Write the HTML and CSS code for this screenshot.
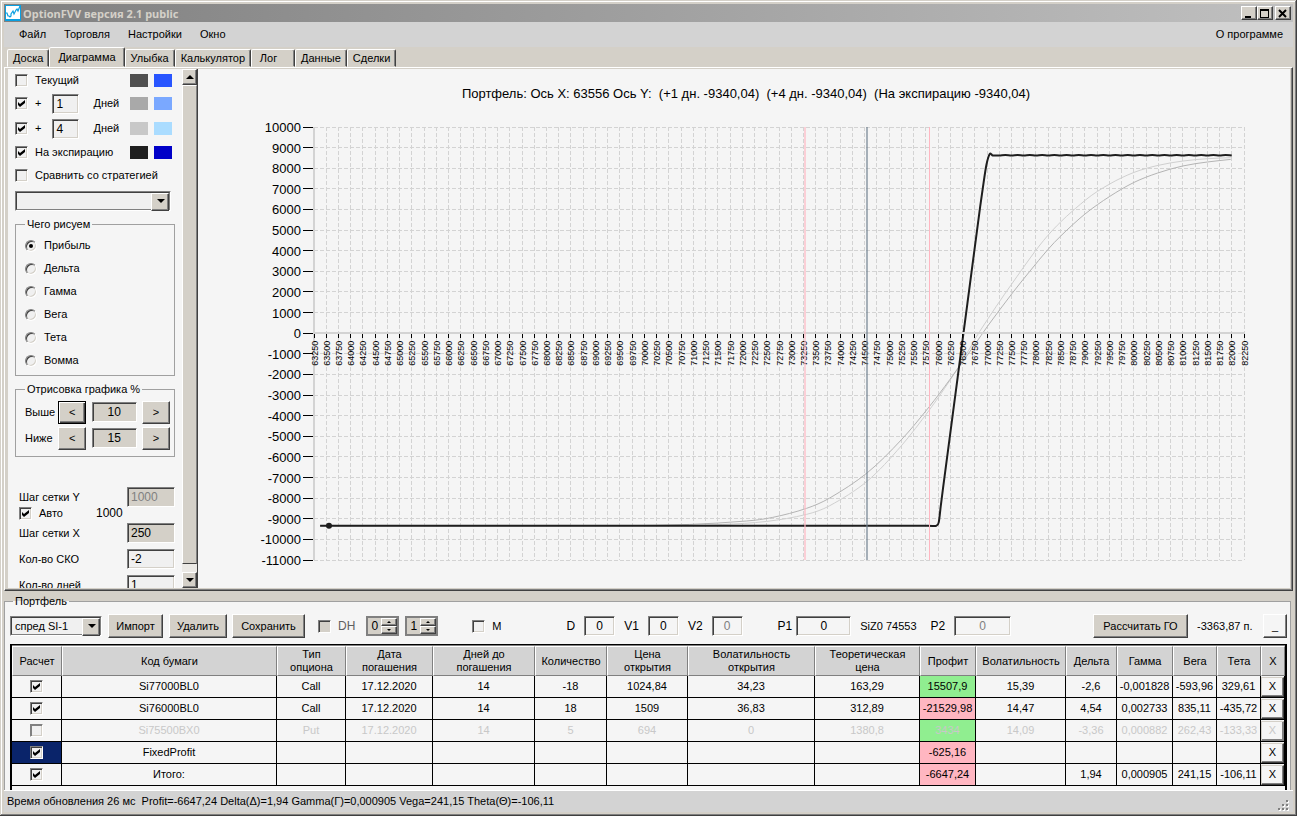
FILE: index.html
```
<!DOCTYPE html>
<html lang="ru">

<head>
    <meta charset="UTF-8">
    <meta name="viewport" content="width=device-width, initial-scale=1.0">
    <title>OptionFVV</title>
    <link rel="stylesheet" href="styles.css">
</head>

<body>
    <header class="titlebar">
        <svg class="logo" viewBox="0 0 16 16" width="16" height="16">
            <rect width="16" height="16" fill="#0a9fe0" />
            <path d="M1 1h14v13H1z" fill="#fff" />
            <path d="M1 8h1l1 3h1l1 1 1-1V9l2-3 1 3 2-4 1-1 1 2 2-5" fill="none" stroke="#0a9fe0" stroke-width="1.2" />
        </svg>
        <h1>OptionFVV версия 2.1 public</h1>
        <button class="win-button" aria-label="Свернуть">
            <svg width="12" height="10"><path d="M3 8h6v2H3z" /></svg>
        </button>
        <button class="win-button" aria-label="Развернуть">
            <svg width="12" height="10"><path d="M2 1h9v9H2zM3 3v6h7V3z" fill-rule="evenodd" /></svg>
        </button>
        <button class="win-button close" aria-label="Закрыть">
            <svg width="12" height="10"><path d="M3 2l7 7M10 2l-7 7" stroke="#000" stroke-width="2" /></svg>
        </button>
    </header>

    <nav class="menu">
        <a href="#">Файл</a>
        <a href="#">Торговля</a>
        <a href="#">Настройки</a>
        <a href="#">Окно</a>
        <a href="#" class="about">О программе</a>
    </nav>

    <div class="tabs">
        <button class="tab">Доска</button>
        <button class="tab active">Диаграмма</button>
        <button class="tab">Улыбка</button>
        <button class="tab">Калькулятор</button>
        <button class="tab log">Лог</button>
        <button class="tab">Данные</button>
        <button class="tab">Сделки</button>
    </div>

    <main class="page">
        <div class="sidebar">
            <div class="row">
                <input type="checkbox" id="current"><label for="current">Текущий</label>
                <span class="swatch dark-gray"></span><span class="swatch blue"></span>
            </div>
            <div class="row days">
                <input type="checkbox" id="plus1" checked><label for="plus1">+</label>
                <input type="text" class="field day" id="day1" value="1"><label for="day1">Дней</label>
                <span class="swatch mid-gray"></span><span class="swatch mid-blue"></span>
            </div>
            <div class="row days">
                <input type="checkbox" id="plus4" checked><label for="plus4">+</label>
                <input type="text" class="field day" id="day4" value="4"><label for="day4">Дней</label>
                <span class="swatch light-gray"></span><span class="swatch light-blue"></span>
            </div>
            <div class="row">
                <input type="checkbox" id="expiry" checked><label for="expiry">На экспирацию</label>
                <span class="swatch black"></span><span class="swatch deep-blue"></span>
            </div>
            <div class="row">
                <input type="checkbox" id="compare"><label for="compare">Сравнить со стратегией</label>
            </div>
            <div class="select strategy">
                <select aria-label="Стратегия"><option></option></select>
            </div>

            <fieldset class="group draw">
                <legend>Чего рисуем</legend>
                <label><input type="radio" name="draw" checked>Прибыль</label>
                <label><input type="radio" name="draw">Дельта</label>
                <label><input type="radio" name="draw">Гамма</label>
                <label><input type="radio" name="draw">Вега</label>
                <label><input type="radio" name="draw">Тета</label>
                <label><input type="radio" name="draw">Вомма</label>
            </fieldset>

            <fieldset class="group range">
                <legend>Отрисовка графика %</legend>
                <div class="range-row">
                    <label for="above">Выше</label>
                    <button class="button focused">&lt;</button>
                    <input type="text" class="field" id="above" value="10">
                    <button class="button">&gt;</button>
                </div>
                <div class="range-row">
                    <label for="below">Ниже</label>
                    <button class="button">&lt;</button>
                    <input type="text" class="field" id="below" value="15">
                    <button class="button">&gt;</button>
                </div>
            </fieldset>

            <div class="grid-settings">
                <div class="setting"><label for="stepY">Шаг сетки Y</label><input type="text" class="field gray" id="stepY" value="1000" disabled></div>
                <div class="auto"><input type="checkbox" id="auto" checked><label for="auto">Авто</label><span>1000</span></div>
                <div class="setting"><label for="stepX">Шаг сетки X</label><input type="text" class="field gray" id="stepX" value="250"></div>
                <div class="setting"><label for="sko">Кол-во СКО</label><input type="text" class="field" id="sko" value="-2"></div>
                <div class="setting"><label for="daysCount">Кол-во дней</label><input type="text" class="field" id="daysCount" value="1"></div>
            </div>
        </div>

        <div class="scrollbar">
            <button class="scroll-button" aria-label="Вверх"><i class="arrow up"></i></button>
            <div class="thumb"></div>
            <div class="track"></div>
            <button class="scroll-button" aria-label="Вниз"><i class="arrow"></i></button>
        </div>

        <div class="chart">
            <svg id="chart"></svg>
        </div>
    </main>

    <fieldset class="portfolio">
        <legend>Портфель</legend>
        <div class="controls">
            <div class="select name">
                <select aria-label="Портфель"><option>спред SI-1</option></select>
            </div>
            <button class="button import">Импорт</button>
            <button class="button delete">Удалить</button>
            <button class="button save">Сохранить</button>
            <label class="check dh"><input type="checkbox" class="gray" disabled>DH</label>
            <div class="spinner">
                <input type="text" value="0" aria-label="DH 1">
                <div><button aria-label="Больше"><i class="arrow up"></i></button><button aria-label="Меньше"><i class="arrow"></i></button></div>
            </div>
            <div class="spinner">
                <input type="text" value="1" aria-label="DH 2">
                <div><button aria-label="Больше"><i class="arrow up"></i></button><button aria-label="Меньше"><i class="arrow"></i></button></div>
            </div>
            <label class="check m"><input type="checkbox">M</label>
            <label class="param d">D<input type="text" class="field" value="0"></label>
            <label class="param">V1<input type="text" class="field" value="0"></label>
            <label class="param">V2<input type="text" class="field" value="0" disabled></label>
            <label class="param p1">P1<input type="text" class="field" value="0"></label>
            <span class="ticker">SiZ0 74553</span>
            <label class="param p2">P2<input type="text" class="field" value="0" disabled></label>
            <button class="button calc">Рассчитать ГО</button>
            <span class="margin">-3363,87 п.</span>
            <button class="button collapse">_</button>
        </div>

        <div class="table-wrap">
            <table>
                <colgroup>
                    <col class="w50"><col><col class="w69"><col class="w87"><col class="w102"><col class="w72">
                    <col class="w81"><col class="w127"><col class="w105"><col class="w56"><col class="w90">
                    <col class="w51"><col class="w56"><col class="w44"><col class="w44"><col class="w24">
                </colgroup>
                <thead>
                    <tr>
                        <th>Расчет</th>
                        <th>Код бумаги</th>
                        <th>Тип<br>опциона</th>
                        <th>Дата<br>погашения</th>
                        <th>Дней до<br>погашения</th>
                        <th>Количество</th>
                        <th>Цена<br>открытия</th>
                        <th>Волатильность<br>открытия</th>
                        <th>Теоретическая<br>цена</th>
                        <th>Профит</th>
                        <th>Волатильность</th>
                        <th>Дельта</th>
                        <th>Гамма</th>
                        <th>Вега</th>
                        <th>Тета</th>
                        <th>X</th>
                    </tr>
                </thead>
                <tbody>
                    <tr>
                        <td><input type="checkbox" aria-label="Расчет Si77000BL0" checked></td>
                        <td>Si77000BL0</td><td>Call</td><td>17.12.2020</td><td>14</td><td>-18</td>
                        <td>1024,84</td><td>34,23</td><td>163,29</td><td class="plus">15507,9</td><td>15,39</td>
                        <td>-2,6</td><td>-0,001828</td><td>-593,96</td><td>329,61</td>
                        <td><button>X</button></td>
                    </tr>
                    <tr>
                        <td><input type="checkbox" aria-label="Расчет Si76000BL0" checked></td>
                        <td>Si76000BL0</td><td>Call</td><td>17.12.2020</td><td>14</td><td>18</td>
                        <td>1509</td><td>36,83</td><td>312,89</td><td class="minus">-21529,98</td><td>14,47</td>
                        <td>4,54</td><td>0,002733</td><td>835,11</td><td>-435,72</td>
                        <td><button>X</button></td>
                    </tr>
                    <tr class="off">
                        <td><input type="checkbox" aria-label="Расчет Si75500BX0"></td>
                        <td>Si75500BX0</td><td>Put</td><td>17.12.2020</td><td>14</td><td>5</td>
                        <td>694</td><td>0</td><td>1380,8</td><td class="plus">3434</td><td>14,09</td>
                        <td>-3,36</td><td>0,000882</td><td>262,43</td><td>-133,33</td>
                        <td><button>X</button></td>
                    </tr>
                    <tr>
                        <td class="selected"><input type="checkbox" aria-label="Расчет FixedProfit" checked></td>
                        <td>FixedProfit</td><td></td><td></td><td></td><td></td>
                        <td></td><td></td><td></td><td class="minus">-625,16</td><td></td>
                        <td></td><td></td><td></td><td></td>
                        <td><button>X</button></td>
                    </tr>
                    <tr>
                        <td><input type="checkbox" aria-label="Расчет итого" checked></td>
                        <td>Итого:</td><td></td><td></td><td></td><td></td>
                        <td></td><td></td><td></td><td class="minus">-6647,24</td><td></td>
                        <td>1,94</td><td>0,000905</td><td>241,15</td><td>-106,11</td>
                        <td><button>X</button></td>
                    </tr>
                </tbody>
            </table>
        </div>
    </fieldset>

    <footer class="status">
        <span>Время обновления 26 мс&nbsp; Profit=-6647,24 Delta(Δ)=1,94 Gamma(Γ)=0,000905 Vega=241,15 Theta(Θ)=-106,11</span>
        <svg class="grip" width="12" height="12">
            <path d="M9 1h2v2H9zM5 5h2v2H5zM9 5h2v2H9zM1 9h2v2H1zM5 9h2v2H5zM9 9h2v2H9z" fill="#fff" />
            <path d="M8 0h2v2H8zM4 4h2v2H4zM8 4h2v2H8zM0 8h2v2H0zM4 8h2v2H4zM8 8h2v2H8z" fill="#808080" />
        </svg>
    </footer>

    <script src="chart.js"></script>
</body>

</html>
```

FILE: styles.css
```
* {
    box-sizing: border-box;
}

body {
    margin: 0;
    height: 100vh;
    padding: 4px;
    display: flex;
    flex-direction: column;
    overflow: hidden;
    background-color: #d4d0c8;
    font-family: "Liberation Sans", Arial, sans-serif;
    font-size: 11px;
    line-height: 13px;
    color: #000;
    box-shadow: inset -1px -1px #404040, inset 1px 1px #d4d0c8, inset -2px -2px #808080, inset 2px 2px #fff;
}

button,
input,
select {
    font: inherit;
    color: inherit;
    margin: 0;
    padding: 0;
    border-radius: 0;
    outline: none;
}

button {
    flex: none;
    background-color: #d4d0c8;
    border: 1px solid;
    border-color: #fff #404040 #404040 #fff;
    box-shadow: inset -1px -1px #808080;
}

fieldset {
    margin: 0;
    padding: 0;
    min-width: 0;
}

/* title and menu */

.titlebar {
    flex: none;
    display: flex;
    align-items: center;
    height: 18px;
    padding: 0 2px 0 1px;
    background: linear-gradient(to right, #808080, #c0c0c0);
}

.titlebar h1 {
    flex: 1;
    margin: 0 0 0 2px;
    font-family: "Noto Sans", Tahoma, sans-serif;
    font-size: 11px;
    font-weight: bold;
    color: #d4d0c8;
}

.win-button {
    width: 16px;
    height: 14px;
}

.win-button svg {
    display: block;
}

.win-button.close {
    margin-left: 2px;
}

.menu {
    flex: none;
    display: flex;
    align-items: center;
    gap: 18px;
    height: 25px;
    padding: 0 10px 0 15px;
    background-color: #d3d3d3;
}

.menu a {
    color: #000;
    text-decoration: none;
}

.menu .about {
    margin-left: auto;
}

/* tabs */

.tabs {
    flex: none;
    display: flex;
    align-items: flex-end;
    height: 20px;
    padding-left: 3px;
}

.tab {
    height: 18px;
    padding: 1px 5px 0;
    border: 1px solid;
    border-color: #fff #404040 transparent #fff;
    border-radius: 2px 2px 0 0;
    box-shadow: inset -1px 0 #808080;
    text-align: center;
}

.tab.active {
    height: 20px;
    padding: 0 8px;
}

.tab.log {
    width: 44px;
    padding-right: 14px;
}

.page {
    flex: 1;
    display: flex;
    min-height: 0;
    padding: 1px 2px 2px 3px;
    border: 1px solid;
    border-color: #fff #404040 #404040 #fff;
    box-shadow: inset -1px -1px #808080;
}

/* sidebar */

.sidebar {
    flex: none;
    width: 174px;
    padding: 0 7px;
    overflow: hidden;
    background-color: #f5f5f5;
}

.row {
    display: flex;
    align-items: center;
    gap: 6px;
    height: 23px;
}

.row:first-child {
    height: 22px;
}

.row.days {
    height: 25px;
}

.row input[type="checkbox"] {
    margin-right: 1px;
}

.row .day {
    width: 27px;
    margin: 0 8px 0 5px;
}

.swatch {
    width: 18px;
    height: 13px;
}

.swatch:nth-last-child(2) {
    margin-left: auto;
}

.swatch:last-child {
    margin-right: 3px;
}

.dark-gray { background-color: #505050; }
.mid-gray { background-color: #a9a9a9; }
.light-gray { background-color: #c8c8c8; }
.black { background-color: #1e1e1e; }
.blue { background-color: #2855ff; }
.mid-blue { background-color: #7aa8ff; }
.light-blue { background-color: #aadcff; }
.deep-blue { background-color: #0000c8; }

input[type="checkbox"],
input[type="radio"] {
    flex: none;
    appearance: none;
    display: block;
    width: 13px;
    height: 13px;
    background-color: #f0f0f0;
    border: 1px solid;
    border-color: #808080 #fff #fff #808080;
    box-shadow: inset 1px 1px #404040, inset -1px -1px #d4d0c8;
}

input[type="checkbox"].gray {
    background-color: #d4d0c8;
}

input[type="checkbox"]:checked::before {
    content: "";
    display: block;
    width: 7px;
    height: 7px;
    margin: 2px;
    background-color: #000;
    clip-path: polygon(0 2px, 2px 4px, 7px 0, 7px 3px, 2px 7px, 0 5px);
}

input[type="radio"] {
    width: 12px;
    height: 12px;
    border-radius: 50%;
}

input[type="radio"]:checked::before {
    content: "";
    display: block;
    width: 4px;
    height: 4px;
    margin: 3px;
    border-radius: 50%;
    background-color: #000;
}

.field {
    height: 20px;
    padding: 0 3px;
    background-color: #f0f0f0;
    border: 1px solid;
    border-color: #808080 #fff #fff #808080;
    box-shadow: inset 1px 1px #404040, inset -1px -1px #d4d0c8;
    font-size: 12px;
}

.field.gray {
    background-color: #d4d0c8;
}

.field:disabled {
    color: #808080;
}

.select {
    position: relative;
    height: 20px;
    border: 1px solid;
    border-color: #808080 #fff #fff #808080;
}

.select select {
    appearance: none;
    display: block;
    width: 100%;
    height: 100%;
    padding: 0 18px 0 3px;
    border: 1px solid;
    border-color: #404040 #808080 #808080 #404040;
    background-color: #f0f0f0;
}

.select::before {
    content: "";
    position: absolute;
    top: 1px;
    right: 1px;
    width: 16px;
    height: 16px;
    background-color: #d4d0c8;
    border: 1px solid;
    border-color: #fff #404040 #404040 #fff;
    box-shadow: inset -1px -1px #808080;
    pointer-events: none;
}

.select::after {
    content: "";
    position: absolute;
    top: 7px;
    right: 5px;
    border: 4px solid transparent;
    border-top-color: #000;
    border-bottom: 0;
    pointer-events: none;
}

.strategy {
    width: 156px;
    margin-top: 4px;
}

.group {
    border: 1px solid #a0a0a0;
}

.group legend {
    padding: 0 2px;
}

.draw {
    height: 158px;
    margin-top: 7px;
    padding: 3px 9px 0;
}

.draw label {
    display: flex;
    align-items: center;
    gap: 7px;
    height: 23px;
}

.range {
    height: 74px;
    margin-top: 7px;
    padding: 3px 4px 0 9px;
}

.range-row {
    display: flex;
    align-items: center;
    justify-content: space-between;
    height: 26px;
}

.range-row label {
    width: 28px;
}

.range-row .button {
    width: 28px;
    height: 23px;
}

.range-row .field {
    width: 45px;
    background-color: #d4d0c8;
    text-align: center;
}

.button.focused {
    border-color: #000;
    box-shadow: inset 1px 1px #fff, inset -1px -1px #404040, inset -2px -2px #808080;
}

.grid-settings {
    display: flex;
    flex-direction: column;
    gap: 6px;
    margin-top: 30px;
    padding-left: 4px;
}

.setting {
    display: flex;
    align-items: center;
    justify-content: space-between;
}

.setting .field {
    width: 48px;
}

.auto {
    display: flex;
    align-items: center;
    gap: 7px;
    height: 13px;
    margin: -6px 0 -3px;
}

.auto span {
    margin-left: 26px;
    font-size: 12px;
}

.scrollbar {
    flex: none;
    display: flex;
    flex-direction: column;
    width: 16px;
    border-right: 1px solid #404040;
}

.scroll-button,
.spinner button {
    display: flex;
    align-items: center;
    justify-content: center;
}

.scroll-button {
    height: 16px;
}

.thumb {
    flex: 1;
    border: 1px solid;
    border-color: #fff #808080 #404040 #fff;
}

.track {
    height: 8px;
    background-color: #ebe9e5;
}

.arrow {
    border: 4px solid transparent;
    border-top-color: #000;
    border-bottom: 0;
}

.arrow.up {
    border-top: 0;
    border-bottom: 4px solid #000;
}

/* chart */

.chart {
    flex: 1;
    min-width: 0;
    background-color: #f5f5f5;
}

.chart svg {
    display: block;
    width: 100%;
    height: 100%;
}

.chart .caption {
    font-size: 13px;
    text-anchor: middle;
    white-space: pre;
}

.chart .y-label {
    font-size: 13px;
    text-anchor: end;
}

.chart .x-label {
    font-size: 9px;
    text-anchor: middle;
}

.chart line {
    shape-rendering: crispEdges;
}

.grid {
    stroke: #d3d3d3;
    stroke-dasharray: 4 2;
}

.axis {
    stroke: #d3d3d3;
    stroke-width: 2;
}

.tick {
    stroke: #000;
}

.series {
    fill: none;
}

.series.day-1 { stroke: #b4b4b4; }
.series.day-4 { stroke: #d0d0d0; }
.series.at-expiry { stroke: #1e1e1e; stroke-width: 2; }

.sigma {
    stroke: #ffb6c1;
}

.sigma.low {
    stroke-width: 2;
    stroke-opacity: 0.6;
}

.price {
    stroke: #708090;
    stroke-width: 2;
    stroke-opacity: 0.6;
}

/* portfolio */

.portfolio {
    flex: none;
    height: 195px;
    margin: 4px 2px 0 0;
    padding: 0 3px 0 5px;
    border: 1px solid #a0a0a0;
    border-bottom: 0;
    background-color: #f5f5f5;
    overflow: hidden;
}

.portfolio legend {
    margin-left: 3px;
    padding: 0 2px;
}

.controls {
    display: flex;
    align-items: center;
    height: 36px;
}

.controls .button {
    height: 24px;
}

.select.name {
    width: 92px;
    margin-right: 6px;
}

.import { width: 55px; margin-right: 6px; }
.delete { width: 58px; margin-right: 5px; }
.save { width: 73px; }

.check {
    display: flex;
    align-items: center;
    gap: 7px;
}

.check.dh {
    margin: 0 11px 0 13px;
    font-size: 12px;
    color: #606060;
}

.check.m {
    margin-left: 28px;
}

.spinner {
    display: flex;
    width: 33px;
    height: 20px;
    margin-right: 6px;
    border: 2px solid #808080;
    background-color: #d4d0c8;
}

.spinner input {
    width: 13px;
    border: 0;
    background: none;
    text-align: center;
    font-size: 12px;
}

.spinner div {
    flex: 1;
    display: flex;
    flex-direction: column;
}

.spinner button {
    height: 8px;
}

.spinner .arrow {
    border-width: 2px;
    border-bottom: 0;
}

.spinner .arrow.up {
    border-top: 0;
    border-bottom: 2px solid #000;
}

.param {
    display: flex;
    align-items: center;
    gap: 9px;
    margin-right: 9px;
    font-size: 12px;
}

.param .field {
    width: 31px;
    text-align: center;
    background-color: #f5f5f5;
}

.param.d {
    margin-left: 65px;
}

.param.p1 {
    gap: 4px;
    margin-left: 26px;
}

.param.p1 .field {
    width: 55px;
}

.param.p2 {
    margin-left: 14px;
}

.param.p2 .field {
    width: 57px;
}

.calc {
    width: 95px;
    margin: 0 9px 0 auto;
}

.margin {
    width: 66px;
}

.collapse {
    width: 24px;
    background-color: #f5f5f5;
}

.table-wrap {
    height: 150px;
    border: 2px solid #000;
    border-top: 1px solid #000;
    box-shadow: inset 0 1px #808080;
    padding-top: 1px;
}

table {
    width: 100%;
    table-layout: fixed;
    border-collapse: separate;
    border-spacing: 0;
}

.w24 { width: 24px; }
.w44 { width: 44px; }
.w50 { width: 50px; }
.w51 { width: 51px; }
.w56 { width: 56px; }
.w69 { width: 69px; }
.w72 { width: 72px; }
.w81 { width: 81px; }
.w87 { width: 87px; }
.w90 { width: 90px; }
.w102 { width: 102px; }
.w105 { width: 105px; }
.w127 { width: 127px; }

th {
    height: 30px;
    padding: 0;
    font-weight: normal;
    background-color: #d3d3d3;
    border: 1px solid;
    border-color: #fff #808080 #808080 #fff;
}

td {
    height: 22px;
    padding: 0;
    text-align: center;
    white-space: nowrap;
    border-right: 1px solid #000;
    border-bottom: 1px solid #000;
}

td input[type="checkbox"] {
    margin: 0 auto;
}

td button {
    display: block;
    width: 100%;
    height: 20px;
    background-color: #f5f5f5;
    border-color: #d4d0c8 #404040 #404040 #d4d0c8;
}

.off td {
    color: #c8c8c8;
}

.off button {
    border-color: #d4d0c8 #808080 #808080 #d4d0c8;
}

.off input[type="checkbox"] {
    box-shadow: inset 1px 1px #808080, inset -1px -1px #d4d0c8;
}

.plus { background-color: #90ee90; }
.minus { background-color: #ffb6c1; }
.selected { background-color: #0a246a; }

.status {
    flex: none;
    display: flex;
    align-items: center;
    justify-content: space-between;
    height: 22px;
    padding: 0 3px;
    background-color: #d3d3d3;
    border-top: 1px solid #fff;
}

.grip {
    align-self: flex-end;
}
```

FILE: chart.js
```
const svg = document.getElementById('chart');

const xMin = 63250, xMax = 82250, xStep = 250;
const yMin = -11000, yMax = 10000, yStep = 1000;
const plot = { left: 116, right: 46, top: 58, bottom: 28 };

const caption = 'Портфель: Ось X: 63556 Ось Y:  (+1 дн. -9340,04)  (+4 дн. -9340,04)  (На экспирацию -9340,04)';

const day1 = [
    [63375, -9340], [69500, -9335], [70925, -9275], [72084, -9109], [72621, -8934], [73309, -8498],
    [73786, -7994], [74562, -6752], [75251, -5166], [75815, -3580], [76238, -2256],
    [76749, -558], [77008, 329], [77519, 1949], [77872, 2997], [78240, 4049],
    [78512, 4728], [79002, 5781], [79507, 6634], [80003, 7313], [80487, 7769],
    [80998, 8109], [81503, 8303], [81979, 8429]
];

const day4 = [
    [63375, -9340], [70500, -9335], [71600, -9275], [72492, -9130], [73309, -8789],
    [73786, -8367], [74562, -7155], [75251, -5457], [75815, -3745], [76238, -2304],
    [76544, -1160], [76851, 87], [77519, 2434], [78246, 4750], [79002, 6440],
    [79507, 7236], [80003, 7798], [80493, 8138], [81004, 8351], [81503, 8463], [81979, 8511]
];

const expiry = [
    [63375, -9340], [75700, -9340], [75880, -9345], [75960, -9340], [76013, -9175], [76054, -8400],
    [76100, -7540], [76300, -3940], [76500, -340], [76700, 3260], [76860, 6140],
    [76930, 7300], [76988, 8172], [77055, 8690], [77117, 8620]
];
for (let x = 77250, i = 0; x <= 82000; x += 125, i++) {
    expiry.push([x, i % 2 ? 8640 : 8620]);
}

function add(name, attrs, text) {
    const el = document.createElementNS('http://www.w3.org/2000/svg', name);
    for (const key in attrs) el.setAttribute(key, attrs[key]);
    if (text !== undefined) el.textContent = text;
    svg.appendChild(el);
}

// Smooth line through all points
function curve(points) {
    let d = `M${points[0]}`;
    for (let i = 0; i < points.length - 1; i++) {
        const p0 = points[i - 1] || points[i];
        const p1 = points[i];
        const p2 = points[i + 1];
        const p3 = points[i + 2] || p2;
        const h = p2[0] - p1[0];
        const s1 = (p2[1] - p0[1]) / (p2[0] - p0[0]);
        const s2 = (p3[1] - p1[1]) / (p3[0] - p1[0]);
        d += `C${p1[0] + h / 3},${p1[1] + s1 * h / 3} ${p2[0] - h / 3},${p2[1] - s2 * h / 3} ${p2}`;
    }
    return d;
}

function draw() {
    svg.innerHTML = '';
    const left = plot.left;
    const right = svg.clientWidth - plot.right;
    const top = plot.top;
    const bottom = svg.clientHeight - plot.bottom;
    const px = x => left + (x - xMin) / (xMax - xMin) * (right - left);
    const py = y => bottom - (y - yMin) / (yMax - yMin) * (bottom - top);
    const snap = v => Math.floor(v) + 0.5;
    const line = (cls, x1, y1, x2, y2) => add('line', { class: cls, x1, y1, x2, y2 });
    const path = (cls, data) => add('path', { class: 'series ' + cls, d: curve(data.map(p => [px(p[0]), py(p[1])])) });

    add('text', { class: 'caption', x: svg.clientWidth / 2 + 2, y: 29 }, caption);

    for (let y = yMin; y <= yMax; y += yStep) {
        line('grid', left, snap(py(y)), right, snap(py(y)));
        line('tick', left - 11, snap(py(y)), left - 1, snap(py(y)));
        add('text', { class: 'y-label', x: left - 13, y: Math.round(py(y)) + 5 }, y);
    }
    for (let x = xMin + xStep; x <= xMax; x += xStep) {
        line('grid', snap(px(x)), top, snap(px(x)), bottom);
    }
    line('axis', left, top, left, bottom);

    path('day-4', day4);
    path('day-1', day1);
    path('at-expiry', expiry);
    add('circle', { cx: px(63556), cy: py(-9340), r: 3, fill: '#1e1e1e' });

    line('axis', left, Math.round(py(0)), right, Math.round(py(0)));
    for (let x = xMin; x <= xMax; x += xStep) {
        const cx = snap(px(x));
        line('tick', cx, py(0) + 1, cx, py(0) + 5);
        add('text', { class: 'x-label', transform: `translate(${cx + 3} ${py(0) + 20}) rotate(-90)` }, x);
    }

    line('sigma low', px(73291), top, px(73291), bottom);
    line('price', px(74553), top, px(74553), bottom);
    line('sigma', snap(px(75815)), top, snap(px(75815)), bottom);
}

draw();
window.addEventListener('resize', draw);
```
